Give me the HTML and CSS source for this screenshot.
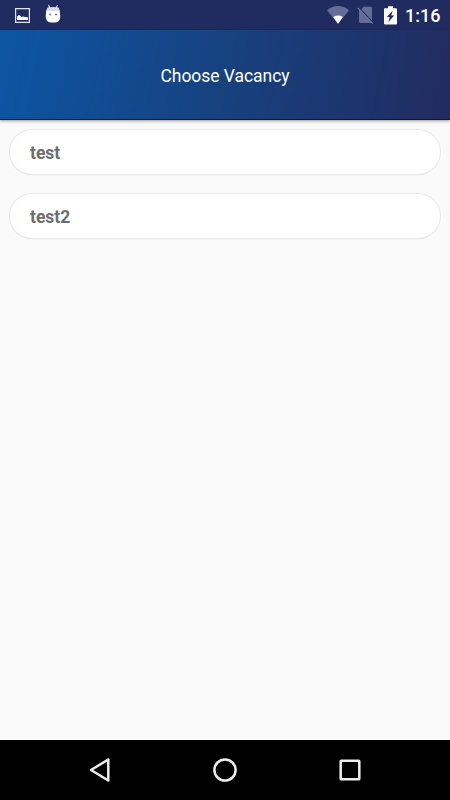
FILE: index.html
```html
<!DOCTYPE html>
<html lang="en">
<head>
<meta charset="utf-8">
<title>Choose Vacancy</title>
<link rel="stylesheet" href="styles.css">
</head>
<body>
<div class="status">
  <svg class="picture" width="15" height="15" viewBox="0 0 15 15"><path d="M.6.6h13.8v13.8H.6z" fill="none" stroke="#e4e5ed" stroke-width="1.2"/><path d="M2 12V8.5l1.5-1.3q.7-.5 1.4.3l1.6 1.6q2-1.2 3.3 0 1.6-.6 3.2.4V12z" fill="#fff"/></svg>
  <svg class="droid" width="16" height="20" viewBox="0 0 16 20"><path d="M3.5 1l1.3 3M12.5 1l-1.3 3" stroke="#d5d6e2" stroke-width="1.2"/><path d="M2.5 3.8Q8 2.8 13.5 3.8Q15.5 7 15.3 12Q15.3 17.5 11.5 18.2Q8 18.8 4.5 18.2Q.7 17.5.7 12Q.5 7 2.5 3.8z" fill="#fff"/><path d="M2.5 3.8Q8 2.8 13.5 3.8L14.7 7H1.3z" fill="#d9dae5"/><circle cx="5" cy="10.5" r="1.1" fill="#777d9d"/><circle cx="11" cy="10.5" r="1.1" fill="#777d9d"/></svg>
  <span class="grow"></span>
  <svg class="wifi" width="22" height="18" viewBox="0 0 22 18"><path d="M0 4.2Q11-4.2 22 4.2L11 18z" fill="#666d95"/><path d="M6.2 11Q11 8.2 15.8 11L11 17.7z" fill="#fff"/></svg>
  <svg class="nosim" width="18" height="18" viewBox="0 0 18 18"><path d="M6.4.7h7.2q1.4 0 1.4 1.4v12.3L4.4 3.2zM2 3.3L14.8 17H3.4Q2 17 2 15.6z" fill="#666d95"/><path d="M.8 1.8L15.8 17.6" stroke="#747b9f" stroke-width="1.2"/></svg>
  <svg class="battery" width="13" height="19" viewBox="0 0 13 19"><path d="M4 .3h5v2h3q1 0 1 1v14.2q0 1-1 1H1q-1 0-1-1V3.3q0-1 1-1h3z" fill="#fff"/><path d="M8.7 4.8L2.8 11h3L4.3 16l6-6.5H7.2z" fill="#202b60"/></svg>
  <span class="clock">1:16</span>
</div>
<header class="bar"><h1>Choose Vacancy</h1></header>
<main class="list">
  <div class="card">test</div>
  <div class="card">test2</div>
</main>
<nav class="nav">
  <svg width="26" height="26" viewBox="0 0 26 26"><path d="M21.3 2.5v21L4 13z"/></svg>
  <svg width="26" height="26" viewBox="0 0 26 26"><circle cx="13" cy="13" r="10.6"/></svg>
  <svg width="26" height="26" viewBox="0 0 26 26"><rect x="3.7" y="3.7" width="18.6" height="18.6" rx=".6"/></svg>
</nav>
</body>
</html>
```

FILE: styles.css
```css
* { box-sizing: border-box; }
body {
  margin: 0;
  height: 800px;
  display: flex;
  flex-direction: column;
  background: #fafafa;
  font-family: Roboto, sans-serif;
  overflow: hidden;
}
svg { display: block; flex: none; }
.status {
  height: 30px;
  flex: none;
  display: flex;
  align-items: flex-start;
  padding: 0 10px 0 15px;
  background: #202b60;
  color: #fff;
}
.picture { margin-top: 8px; }
.droid { margin: 4px 0 0 14.5px; }
.grow { flex: 1; }
.wifi { margin: 6px 8px 0 0; }
.nosim { margin: 6px 9px 0 0; }
.battery { margin: 6px 8px 0 0; }
.clock { font-size: 18px; font-weight: 500; line-height: 31px; width: 35px; white-space: nowrap; }
.bar {
  height: 90px;
  flex: none;
  display: flex;
  align-items: center;
  justify-content: center;
  background: linear-gradient(101.3deg, #0d55a4, #17417f 50%, #222b60);
  border-bottom: 1px solid rgba(0, 0, 90, .65);
  box-shadow: 0 1px 3px rgba(0, 0, 0, .4);
}
h1 {
  margin: 2px 0 0;
  color: #fff;
  font-size: 17.5px;
  font-weight: 400;
  letter-spacing: -.05px;
  line-height: 24px;
}
.list {
  flex: 1;
  display: flex;
  flex-direction: column;
  gap: 20px;
  padding: 10px;
}
.card {
  height: 44px;
  padding: 0 20px;
  border-radius: 22px;
  background: #fff;
  box-shadow: 0 0 0 1px #e9e9e9, 0 1px 1px rgba(0, 0, 0, .22);
  color: #6d6d6d;
  font-size: 17.5px;
  font-weight: 700;
  line-height: 47px;
}
.nav {
  height: 60px;
  flex: none;
  display: flex;
  align-items: center;
  justify-content: center;
  gap: 99px;
  background: #000;
}
.nav svg { fill: none; stroke: #eee; stroke-width: 2.5; stroke-linejoin: round; }
```
